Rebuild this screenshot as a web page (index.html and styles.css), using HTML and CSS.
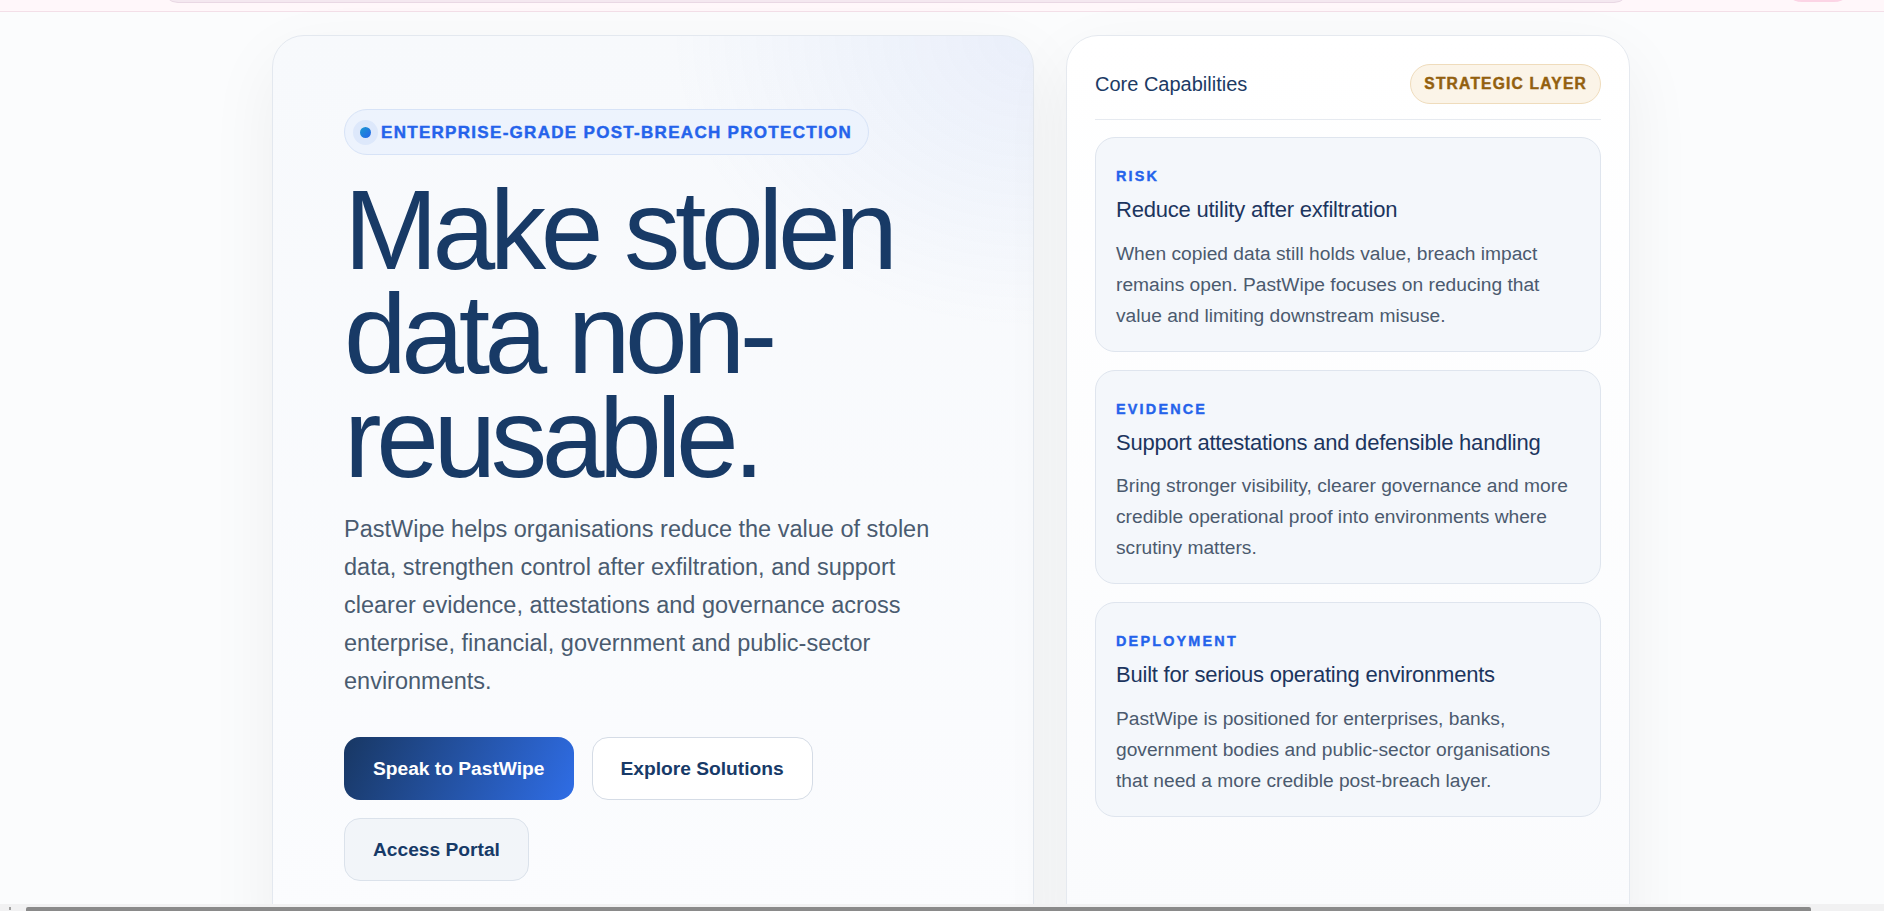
FILE: index.html
```html
<!DOCTYPE html>
<html lang="en">
<head>
<meta charset="utf-8">
<title>PastWipe — Make stolen data non-reusable</title>
<link rel="stylesheet" href="styles.css">
</head>
<body>
<header class="topbar">
  <div class="nav-pill"></div>
  <div class="nav-cta"></div>
</header>

<main class="hero">
  <section class="hero-card">
    <div class="eyebrow"><span class="eyebrow-dot"></span><span class="eyebrow-text">Enterprise-grade post-breach protection</span></div>
    <h1 class="hero-title">Make stolen data non-reusable.</h1>
    <p class="hero-lead">PastWipe helps organisations reduce the value of stolen data, strengthen control after exfiltration, and support clearer evidence, attestations and governance across enterprise, financial, government and public-sector environments.</p>
    <div class="actions">
      <a class="btn btn-primary" href="#">Speak to PastWipe</a>
      <a class="btn btn-outline" href="#">Explore Solutions</a>
      <a class="btn btn-soft" href="#">Access Portal</a>
    </div>
  </section>

  <aside class="cap-card">
    <div class="cap-head">
      <span class="cap-heading">Core Capabilities</span>
      <span class="cap-tag">Strategic Layer</span>
    </div>
    <div class="cap-list">
      <article class="cap-item">
        <div class="cap-label">Risk</div>
        <h3 class="cap-title">Reduce utility after exfiltration</h3>
        <p class="cap-text">When copied data still holds value, breach impact remains open. PastWipe focuses on reducing that value and limiting downstream misuse.</p>
      </article>
      <article class="cap-item">
        <div class="cap-label">Evidence</div>
        <h3 class="cap-title">Support attestations and defensible handling</h3>
        <p class="cap-text">Bring stronger visibility, clearer governance and more credible operational proof into environments where scrutiny matters.</p>
      </article>
      <article class="cap-item">
        <div class="cap-label">Deployment</div>
        <h3 class="cap-title">Built for serious operating environments</h3>
        <p class="cap-text">PastWipe is positioned for enterprises, banks, government bodies and public-sector organisations that need a more credible post-breach layer.</p>
      </article>
    </div>
  </aside>
</main>

<div class="hscroll"><span class="hscroll-arrow"></span><span class="hscroll-thumb"></span></div>
</body>
</html>
```

FILE: styles.css
```css
* { box-sizing: border-box; }

html, body {
  margin: 0;
  padding: 0;
}

body {
  font-family: "Liberation Sans", Arial, sans-serif;
  background: #fbfcfd;
  color: #1c355e;
  min-height: 911px;
  overflow: hidden;
}

/* top header (mostly scrolled off) */
.topbar {
  height: 12px;
  overflow: hidden;
  display: flex;
  align-items: flex-end;
  background: #fff7fa;
  border-bottom: 1px solid #f3dfe8;
}

.nav-pill {
  flex: none;
  width: 1468px;
  height: 40px;
  margin-left: 162px;
  margin-bottom: 8px;
  border-radius: 16px;
  background: #f4e8f0;
  border: 1px solid #e9d8e4;
}

.nav-cta {
  flex: none;
  width: 72px;
  height: 40px;
  margin-left: 152px;
  margin-bottom: 9px;
  border-radius: 20px;
  background: #fcd4e5;
}

/* hero grid */
.hero {
  display: grid;
  grid-template-columns: 762px 564px;
  column-gap: 32px;
  margin: 23px 0 0 272px;
  align-items: stretch;
}

.hero-card {
  border: 1px solid #e3e8ef;
  border-radius: 32px;
  padding: 73px 71px 72px 71px;
  background:
    radial-gradient(ellipse 520px 420px at 100% 0%, rgba(96, 140, 235, 0.09), rgba(96, 140, 235, 0) 70%),
    linear-gradient(180deg, #f7f9fc 0%, #fbfcfe 100%);
  box-shadow: 0 24px 70px rgba(15, 23, 42, 0.06);
}

.eyebrow {
  display: inline-flex;
  align-items: center;
  gap: 10px;
  height: 46px;
  padding: 0 16px 0 15px;
  border-radius: 999px;
  background: #edf3fd;
  border: 1px solid #d7e3f7;
}

.eyebrow-dot {
  width: 11px;
  height: 11px;
  border-radius: 50%;
  background: linear-gradient(135deg, #1a9ad0, #2563eb);
  box-shadow: 0 0 0 7px #dde8fb;
}

.eyebrow-text {
  font-size: 17px;
  font-weight: 700;
  letter-spacing: 1.3px;
  text-transform: uppercase;
  color: #2563eb;
  line-height: 1;
  -webkit-text-stroke: 0.45px currentColor;
}

.hero-title {
  margin: 24px 0 0;
  font-size: 112.8px;
  line-height: 103.8px;
  font-weight: 400;
  letter-spacing: -0.048em;
  color: #183a66;
}

.hero-lead {
  margin: 20px 0 0;
  font-size: 23.5px;
  line-height: 38px;
  color: #4a5b70;
}

.actions {
  display: flex;
  flex-wrap: wrap;
  gap: 18px;
  margin-top: 37px;
}

.btn {
  display: inline-flex;
  align-items: center;
  justify-content: center;
  height: 63px;
  padding: 0 28px;
  border-radius: 16px;
  border: 1px solid transparent;
  font-size: 19.2px;
  font-weight: 700;
  text-decoration: none;
  color: #173a68;
}

.btn-primary {
  border: none;
  padding: 0 29px;
  color: #ffffff;
  background: linear-gradient(115deg, #183763 0%, #23509e 45%, #2f6de6 100%);
}

.btn-outline {
  background: #ffffff;
  border-color: #d5dce6;
}

.btn-soft {
  background: #f2f5f9;
  border-color: #dbe2eb;
}

/* capability card */
.cap-card {
  border: 1px solid #e5e9ef;
  border-radius: 32px;
  padding: 28px;
  background: linear-gradient(180deg, #ffffff 0%, #fafbfd 100%);
  box-shadow: 0 24px 70px rgba(15, 23, 42, 0.06);
}

.cap-head {
  display: flex;
  align-items: center;
  justify-content: space-between;
  padding-bottom: 15px;
  border-bottom: 1px solid #e6eaf0;
}

.cap-heading {
  font-size: 20px;
  color: #1c3a64;
}

.cap-tag {
  display: inline-flex;
  align-items: center;
  height: 40px;
  padding: 0 13px;
  border-radius: 999px;
  background: #fbf4e8;
  border: 1px solid #efdcbc;
  color: #93600f;
  font-size: 15.6px;
  font-weight: 700;
  letter-spacing: 1.2px;
  text-transform: uppercase;
  -webkit-text-stroke: 0.45px currentColor;
}

.cap-list {
  display: flex;
  flex-direction: column;
  gap: 18px;
  margin-top: 17px;
}

.cap-item {
  padding: 28px 20px 20px;
  border-radius: 20px;
  background: #f4f7fb;
  border: 1px solid #dfe5ee;
}

.cap-label {
  font-size: 14.4px;
  line-height: 20px;
  font-weight: 700;
  letter-spacing: 2.2px;
  text-transform: uppercase;
  color: #2563eb;
  -webkit-text-stroke: 0.4px currentColor;
}

.cap-title {
  margin: 10px 0 0;
  font-size: 22px;
  line-height: 28.6px;
  font-weight: 400;
  letter-spacing: -0.01em;
  color: #1c355e;
}

.cap-text {
  margin: 13px 0 0;
  font-size: 19.2px;
  line-height: 31px;
  color: #4b5a6e;
}

/* horizontal scrollbar overlay at the bottom of the viewport */
.hscroll {
  position: fixed;
  left: 0;
  right: 0;
  bottom: 0;
  height: 7px;
  background: #f1f1f2;
}

.hscroll-arrow {
  position: absolute;
  left: 9px;
  top: 3px;
  width: 2px;
  height: 3px;
  background: #a0a0a0;
}

.hscroll-thumb {
  position: absolute;
  left: 26px;
  top: 3px;
  width: 1785px;
  height: 4px;
  border-radius: 2px 2px 0 0;
  background: #8a8a8a;
}
```
